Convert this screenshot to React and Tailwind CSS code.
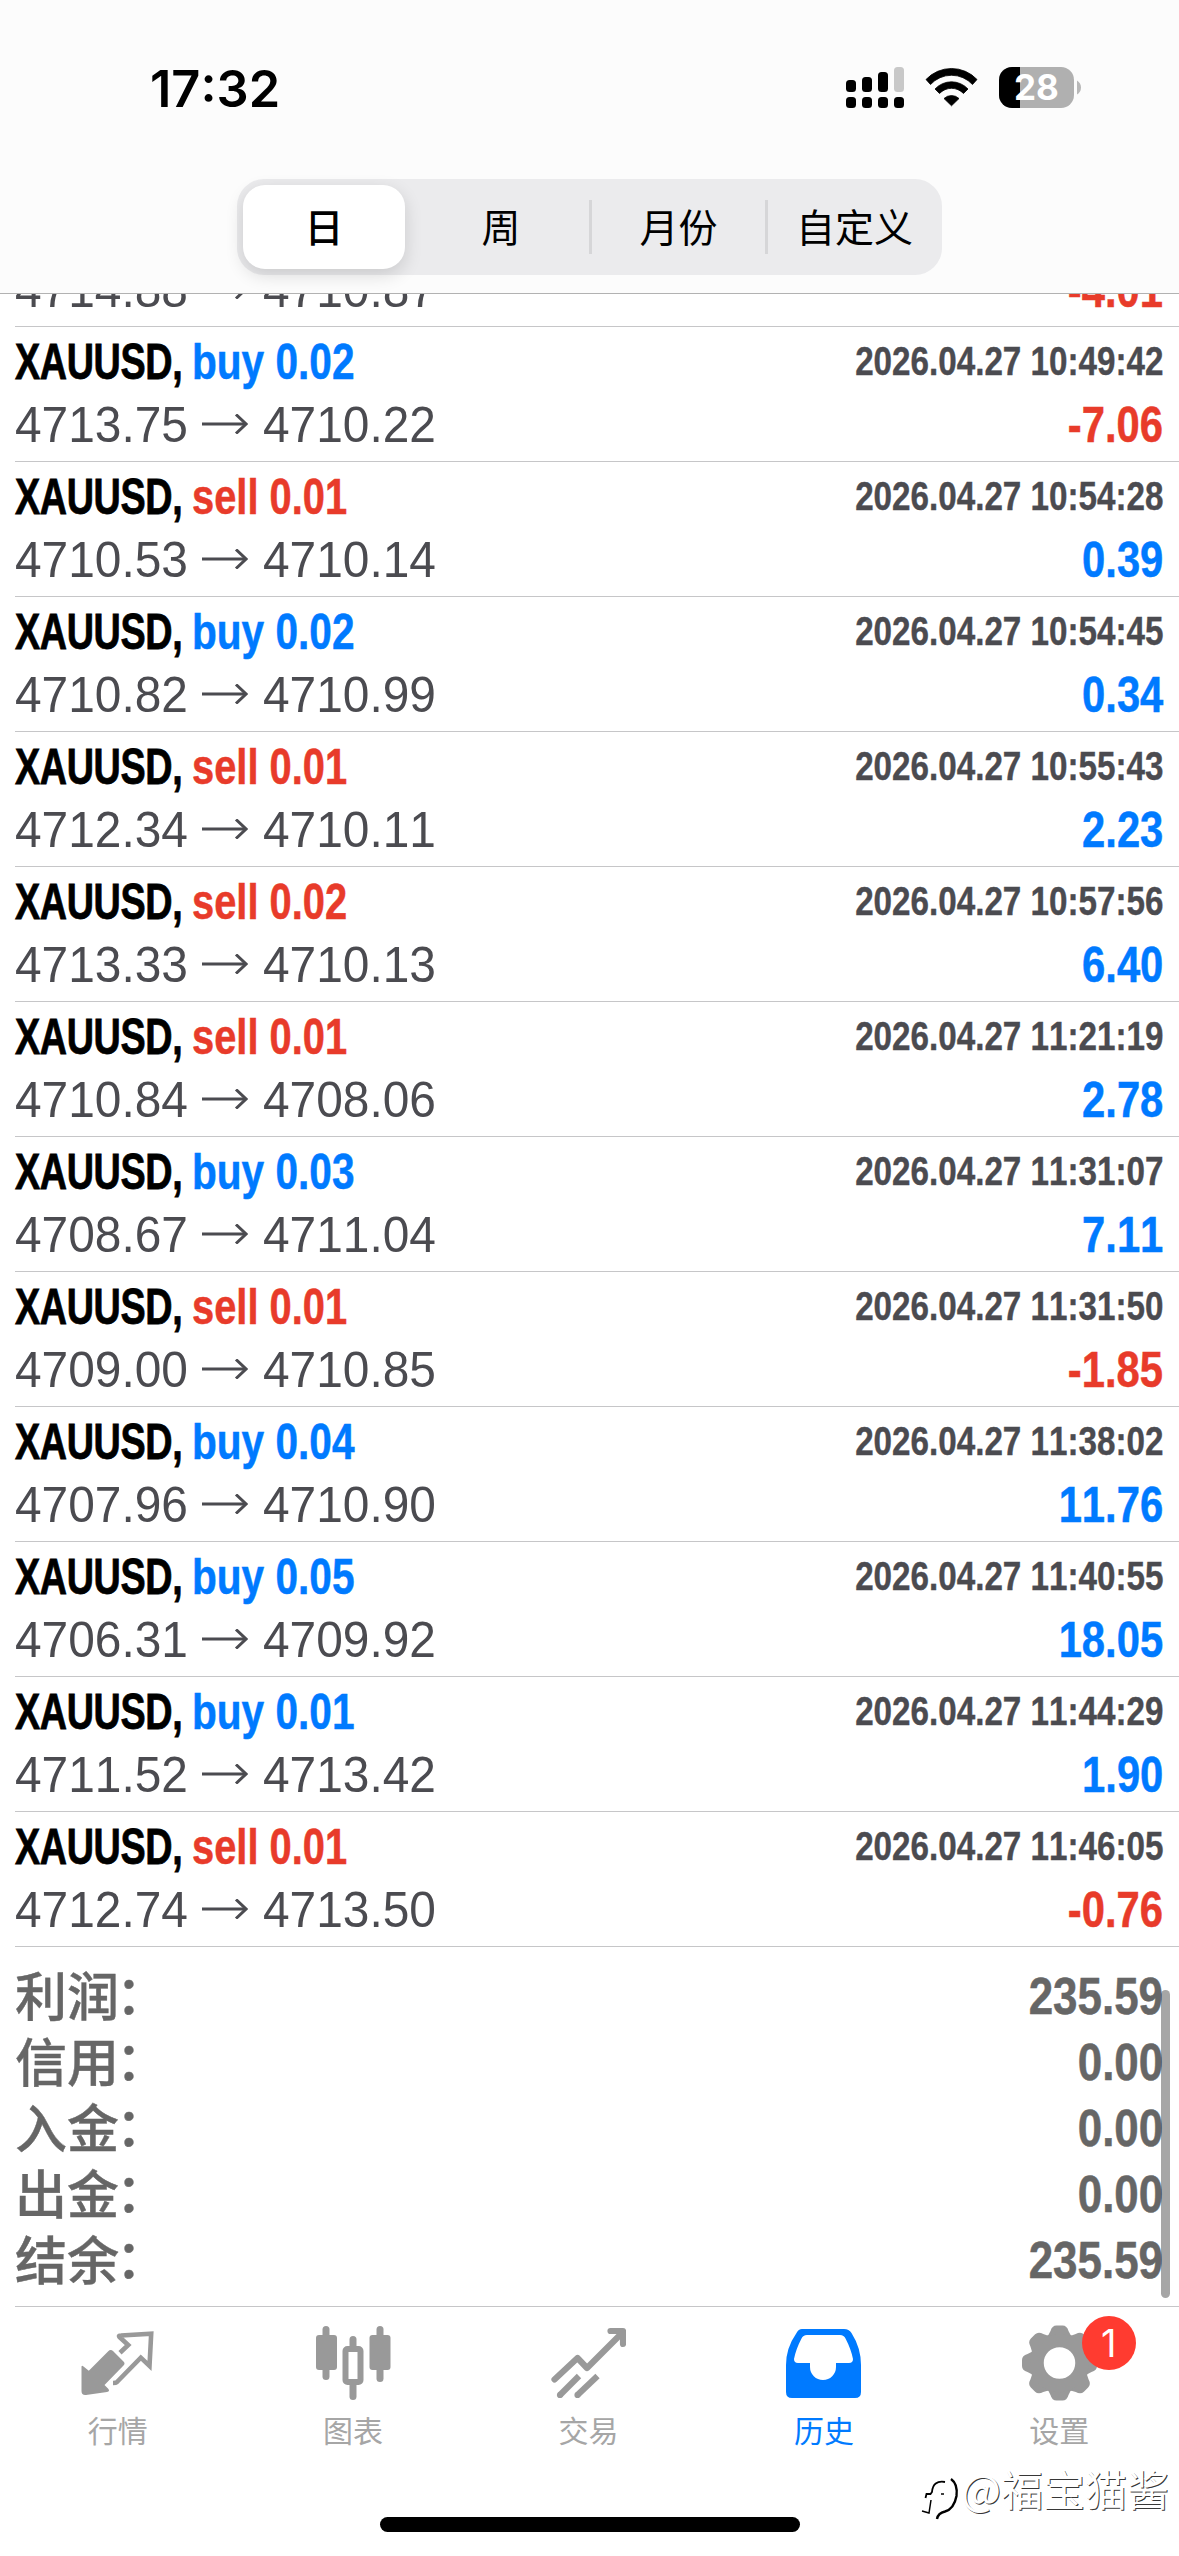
import { useState } from 'react';

const trades = [
  { id: 1, side: 'buy', volume: '0.02', time: '2026.04.27 10:49:42', open: '4713.75', close: '4710.22', profit: '-7.06' },
  { id: 2, side: 'sell', volume: '0.01', time: '2026.04.27 10:54:28', open: '4710.53', close: '4710.14', profit: '0.39' },
  { id: 3, side: 'buy', volume: '0.02', time: '2026.04.27 10:54:45', open: '4710.82', close: '4710.99', profit: '0.34' },
  { id: 4, side: 'sell', volume: '0.01', time: '2026.04.27 10:55:43', open: '4712.34', close: '4710.11', profit: '2.23' },
  { id: 5, side: 'sell', volume: '0.02', time: '2026.04.27 10:57:56', open: '4713.33', close: '4710.13', profit: '6.40' },
  { id: 6, side: 'sell', volume: '0.01', time: '2026.04.27 11:21:19', open: '4710.84', close: '4708.06', profit: '2.78' },
  { id: 7, side: 'buy', volume: '0.03', time: '2026.04.27 11:31:07', open: '4708.67', close: '4711.04', profit: '7.11' },
  { id: 8, side: 'sell', volume: '0.01', time: '2026.04.27 11:31:50', open: '4709.00', close: '4710.85', profit: '-1.85' },
  { id: 9, side: 'buy', volume: '0.04', time: '2026.04.27 11:38:02', open: '4707.96', close: '4710.90', profit: '11.76' },
  { id: 10, side: 'buy', volume: '0.05', time: '2026.04.27 11:40:55', open: '4706.31', close: '4709.92', profit: '18.05' },
  { id: 11, side: 'buy', volume: '0.01', time: '2026.04.27 11:44:29', open: '4711.52', close: '4713.42', profit: '1.90' },
  { id: 12, side: 'sell', volume: '0.01', time: '2026.04.27 11:46:05', open: '4712.74', close: '4713.50', profit: '-0.76' },
];

const summary = [
  { label: '利润', value: '235.59' },
  { label: '信用', value: '0.00' },
  { label: '入金', value: '0.00' },
  { label: '出金', value: '0.00' },
  { label: '结余', value: '235.59' },
];

const periods = ['日', '周', '月份', '自定义'];

function StatusBar() {
  return (
    <div className="flex h-[179px] items-start justify-between pl-[150px] pr-[98px] pt-[59px]">
      <span className="font-['Inter',sans-serif] text-[50.5px] leading-[60px] font-semibold text-black">17:32</span>
      <svg width="238" height="41" viewBox="0 0 238 41" className="mt-2">
        <rect x="3" y="13" width="10" height="12" rx="3.5" />
        <rect x="19" y="10" width="10" height="15" rx="3.5" />
        <rect x="35" y="5" width="10" height="20" rx="3.5" />
        <rect x="51" y="0" width="10" height="25" rx="3.5" fill="#c8c8c8" />
        <rect x="3" y="30" width="10" height="11" rx="3.5" />
        <rect x="19" y="30" width="10" height="11" rx="3.5" />
        <rect x="35" y="30" width="10" height="11" rx="3.5" />
        <rect x="51" y="30" width="10" height="11" rx="3.5" />
        <path d="M83 12.5A35 35 0 0 1 134 12.5L129.5 17.5A28.5 28.5 0 0 0 87.5 17.5Z" strokeWidth="0.8" stroke="#000" strokeLinejoin="round" />
        <path d="M92 22A22.5 22.5 0 0 1 125 22L120.5 26.5A16.5 16.5 0 0 0 96.5 26.5Z" strokeWidth="0.8" stroke="#000" strokeLinejoin="round" />
        <path d="M101 31.5A11 11 0 0 1 116 31.5L108.5 38.8Z" strokeWidth="0.8" stroke="#000" strokeLinejoin="round" />
        <rect x="156" y="0" width="75" height="41" rx="13" fill="#b0b0b0" />
        <path d="M177 0H169A13 13 0 0 0 156 13V28A13 13 0 0 0 169 41H177Z" />
        <path d="M234 13.5Q238 16 238 20.5Q238 25 234 27.5Z" fill="#b8b8b8" />
        <text x="193.5" y="33" textAnchor="middle" fill="#fff" fontFamily="Inter, sans-serif" fontSize="35" fontWeight="700">28</text>
      </svg>
    </div>
  );
}

function PeriodTabs({ value, onChange }) {
  return (
    <div className="ml-[237px] flex h-24 w-[705px] items-center rounded-[27px] bg-[#ebebed] font-['Noto_Sans_CJK_SC',sans-serif] text-[39px] text-black">
      {periods.map((period, index) => {
        const active = period === value;
        return (
          <button
            key={period}
            type="button"
            onClick={() => onChange(period)}
            className={`flex h-[54px] w-44 items-center justify-center ${index > 1 ? 'border-l-[3px] border-[#d6d6d8]' : ''} ${active ? 'font-medium' : ''}`}
          >
            {active ? (
              <span className="-ml-0.5 flex h-[84px] w-[162px] shrink-0 items-center justify-center rounded-[22px] bg-white pb-[3px] shadow-[0_6px_18px_rgba(0,0,0,0.14)]">
                {period}
              </span>
            ) : (
              <span className="pb-[3px]">{period}</span>
            )}
          </button>
        );
      })}
    </div>
  );
}

// Squeezes regular sans text into the condensed look used by the trade list
const condensedStyles = {
  symbol: 'inline-block w-[177px] origin-left scale-x-[0.755] text-[50px] font-bold tracking-[-0.5px] [-webkit-text-stroke:0.8px]',
  buy: 'inline-block origin-left scale-x-[0.82] text-[49.5px] font-bold text-[#007aff] [-webkit-text-stroke:0.5px]',
  sell: 'inline-block origin-left scale-x-[0.805] text-[49.5px] font-bold text-[#e83b2a] [-webkit-text-stroke:0.5px]',
  time: 'mb-[3px] origin-right scale-x-[0.83] text-[40px] font-bold text-[#4b4b50] [-webkit-text-stroke:0.4px]',
  profit: 'origin-right scale-x-[0.835] text-[50px] font-bold [-webkit-text-stroke:0.5px]',
  total: 'origin-right scale-x-[0.845] text-[52px] font-bold [-webkit-text-stroke:0.5px]',
};

function Condensed({ kind, className = '', children }) {
  return <span className={`whitespace-nowrap ${condensedStyles[kind]} ${className}`}>{children}</span>;
}

function Price({ children }) {
  return <span className="w-[174px] origin-left scale-x-[0.957] whitespace-nowrap text-[50px]">{children}</span>;
}

function PriceLine({ open, close, profit }) {
  const profitColor = profit.startsWith('-') ? 'text-[#e83b2a]' : 'text-[#007aff]';

  return (
    <div className="flex h-16 shrink-0 items-center justify-between">
      <div className="flex items-center text-[#4b4b50]">
        <Price>{open}</Price>
        <svg width="46" height="20" viewBox="0 0 46 20" fill="none" stroke="#4b4b50" strokeWidth="3" className="mb-0.5 ml-[13px] mr-[15px]">
          <path d="M0 10H44" />
          <path d="M34 0.5L44 10L34 19.5" />
        </svg>
        <Price>{close}</Price>
      </div>
      <Condensed kind="profit" className={profitColor}>{profit}</Condensed>
    </div>
  );
}

function TradeRow({ trade }) {
  return (
    <li className="ml-[15px] h-[135px] shrink-0 border-b border-[#c6c6c8] pr-4 pt-[5px]">
      <div className="flex h-[61px] items-center justify-between">
        <div className="flex items-center text-black">
          <Condensed kind="symbol">XAUUSD,</Condensed>
          <Condensed kind={trade.side}>{trade.side} {trade.volume}</Condensed>
        </div>
        <Condensed kind="time">{trade.time}</Condensed>
      </div>
      <PriceLine open={trade.open} close={trade.close} profit={trade.profit} />
    </li>
  );
}

function Summary() {
  return (
    <section className="relative h-[359px] shrink-0 pl-[15px] pr-4 pt-4 text-[#666666]">
      {summary.map((item) => (
        <div key={item.label} className="flex h-[66px] items-center justify-between">
          <span className="mb-[5px] flex font-['Noto_Sans_CJK_SC',sans-serif] text-[52px] leading-[60px] font-medium [-webkit-text-stroke:0.4px]">
            {item.label}
            <span className="-ml-[3px] -mt-0.5">：</span>
          </span>
          <Condensed kind="total">{item.value}</Condensed>
        </div>
      ))}
      <div className="absolute right-[9px] top-[43px] h-[308px] w-[9px] rounded-full bg-black/35"></div>
    </section>
  );
}

function QuotesIcon() {
  return (
    <svg width="75" height="76" viewBox="0 0 75 76">
      <path d="M1.5 42Q1.500 40 3.5 41.500L8.8 45.700L28 26.500Q30.500 24 33 26L43.500 36.500Q45.500 38.500 43.500 40.500L24.500 60L28 63.500Q30.500 66 27 67L6 70Q1.500 70.500 1.500 66Z" fill="#999" />
      <path d="M40 27.700L48.200 20L39.500 12Q38 10.500 41 10.500L71.200 8.800L69.500 41L60.800 32.700L36.500 57.500Q36 58 33 58" fill="none" stroke="#999" strokeWidth="4.600" />
    </svg>
  );
}

function ChartIcon() {
  return (
    <svg width="75" height="76" viewBox="0.5 0 75 76" fill="#999">
      <rect x="7" y="1" width="7" height="54" rx="3.5" />
      <rect x="0.5" y="10" width="21" height="35" rx="3" />
      <rect x="61" y="1" width="7" height="56" rx="3.5" />
      <rect x="54" y="10" width="21" height="35" rx="3" />
      <rect x="34" y="11" width="7" height="15" rx="3.5" />
      <rect x="34" y="56" width="7" height="19" rx="3.5" />
      <rect x="30" y="24" width="15" height="33" rx="2" fill="none" stroke="#999" strokeWidth="6" />
    </svg>
  );
}

function TradeIcon() {
  return (
    <svg width="75" height="76" viewBox="0 0 75 76" fill="none" stroke="#999" strokeWidth="6.2">
      <path d="M3.500 54.500L26.500 33L36 43L71 8" strokeLinecap="round" strokeLinejoin="round" />
      <path d="M59.500 6H72V19" strokeLinecap="round" strokeLinejoin="round" />
      <path d="M9 70L28 51" />
      <path d="M26.500 70L46.500 51" />
      <circle cx="9" cy="70" r="3.1" fill="#999" stroke="none" />
      <circle cx="26.5" cy="70" r="3.1" fill="#999" stroke="none" />
    </svg>
  );
}

function HistoryIcon() {
  return (
    <svg width="75" height="76" viewBox="0 0 75 76">
      <path
        fill="#007aff"
        fillRule="evenodd"
        d="M16 4H58Q63 4 65.500 8Q75 23 75 40V67Q75 73 69 73H6Q0 73 0 67V40Q0 23 10.500 8Q12.500 4 16 4ZM21 10Q17 10 15.500 13.500Q10 24 8 34Q8 38 12 38H24V42A12.500 12.500 0 0 0 50 42V38H63Q67 38 67 34Q65 24 59.500 13.500Q58 10 54 10Z"
      />
    </svg>
  );
}

function SettingsIcon() {
  const teeth = [0, 45, 90, 135, 180, 225, 270, 315];
  return (
    <svg width="75" height="76" viewBox="-37.5 -38 75 76" fill="#999">
      {teeth.map((angle) => (
        <path key={angle} transform={`rotate(${angle})`} d="M-14 -25Q-11 -27 -9 -32Q-7.500 -37.500 -3 -37.500H3Q7.500 -37.500 9 -32Q11 -27 14 -25V-18H-14Z" />
      ))}
      <circle r="22.5" fill="none" stroke="#999" strokeWidth="13.5" />
    </svg>
  );
}

const tabs = [
  { label: '行情', icon: QuotesIcon },
  { label: '图表', icon: ChartIcon },
  { label: '交易', icon: TradeIcon },
  { label: '历史', icon: HistoryIcon, active: true },
  { label: '设置', icon: SettingsIcon, badge: 1 },
];

function TabBar() {
  return (
    <nav className="flex h-[171px] w-[1177px] shrink-0 pt-[18px]">
      {tabs.map(({ label, icon: Icon, active, badge }) => (
        <button key={label} type="button" className="flex flex-1 flex-col items-center">
          <span className="relative">
            <Icon />
            {badge && (
              <span className="absolute -right-[39px] -top-[9px] flex size-[54px] items-center justify-center rounded-full bg-[#ff3b30] font-['Inter',sans-serif] text-[38px] text-white">
                {badge}
              </span>
            )}
          </span>
          <span className={`mt-[6px] font-['Noto_Sans_CJK_SC',sans-serif] text-[30px] leading-[44px] ${active ? 'text-[#007aff]' : 'text-[#a6a6a6]'}`}>
            {label}
          </span>
        </button>
      ))}
    </nav>
  );
}

function Watermark() {
  return (
    <div className="absolute right-[10px] top-[2456px] flex items-center">
      <svg width="42" height="46" viewBox="0 0 42 46" fill="none" stroke="#000" className="mt-[18px]">
        <path d="M32 5Q39 10 37.500 22Q35 35 26 37.500Q19 39 18 45" strokeWidth="2.4" />
        <path d="M26 8Q14 6 13 18L11.500 20H7.500L6.500 24" strokeWidth="1.8" />
        <path d="M12 26L10 39L3 37" strokeWidth="1.5" />
        <path d="M22 20H25" strokeWidth="1.5" />
      </svg>
      <span className="font-['Noto_Sans_CJK_SC',sans-serif] text-[42px] leading-[54px] text-white [text-shadow:1px_1px_0.500px_rgba(0,0,0,0.8)]">
        @福宝猫酱
      </span>
    </div>
  );
}

export default function App() {
  const [period, setPeriod] = useState('日');

  return (
    <div className="relative flex h-[2556px] w-[1179px] flex-col overflow-hidden bg-white font-['Liberation_Sans',Arial,sans-serif] [font-kerning:none]">
      <header className="h-[294px] shrink-0 border-b border-[#b2b2b2] bg-[#fcfcfc]">
        <StatusBar />
        <PeriodTabs value={period} onChange={setPeriod} />
      </header>

      <ul className="flex h-[1653px] shrink-0 flex-col overflow-hidden">
        {/* The list is scrolled to the end, only the bottom of this row is left under the header */}
        <li className="ml-[15px] flex h-[33px] shrink-0 flex-col justify-end overflow-hidden border-b border-[#c6c6c8] pb-1 pr-4">
          <PriceLine open="4714.88" close="4710.87" profit="-4.01" />
        </li>
        {trades.map((trade) => (
          <TradeRow key={trade.id} trade={trade} />
        ))}
      </ul>

      <Summary />
      <div className="ml-[15px] h-px shrink-0 bg-[#c6c6c8]"></div>
      <TabBar />
      <div className="ml-[380px] mt-[39px] h-[15px] w-[420px] shrink-0 rounded-full bg-black"></div>
      <Watermark />
    </div>
  );
}
